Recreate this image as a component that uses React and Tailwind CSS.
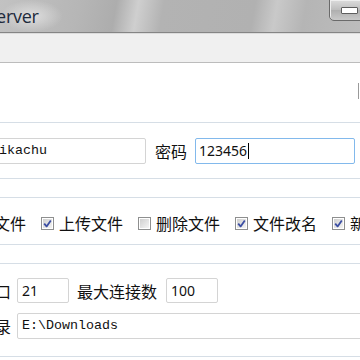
import React from 'react';

const cjk = "font-['Noto_Sans_CJK_SC','Noto_Sans',sans-serif]";

const Check = ({ checked }) => (
  <span className="w-[13px] h-[13px] shrink-0 border border-[#8e8f8f] bg-white p-[1px] flex">
    <span className="flex-1 flex items-center justify-center bg-[linear-gradient(135deg,#cfcfcf,#f4f4f4)]">
      {checked && (
        <svg width="9" height="9" viewBox="0 0 9 9">
          <path d="M1.2 4.6 L3.6 7.4 L7.8 1.4" fill="none" stroke="#3b4ea3" strokeWidth="1.8" strokeLinejoin="round" />
        </svg>
      )}
    </span>
  </span>
);

const Option = ({ checked, label }) => (
  <label className="flex items-center gap-[5px] mr-[15px] shrink-0">
    <Check checked={checked} />
    <span className="w-[64px]">{label}</span>
  </label>
);

const App = () => {
  return (
    <div className={`w-[360px] h-[360px] overflow-hidden bg-white text-[#111] ${cjk} text-[16px] leading-none`}>
      {/* title bar */}
      <div className="h-[33px] flex items-start justify-between border-b border-[#858585] bg-[linear-gradient(100deg,#c2c2c2_0%,#b6b6b6_22%,#adadad_32%,#cfcfcf_38%,#b3b3b3_45%,#b1b1b1_70%,#c9c9c9_76%,#b5b5b5_84%,#bcbcbc_100%)]">
        <div className="h-[32px] flex items-center pr-6 bg-[radial-gradient(ellipse_at_center,#dedede_0%,rgba(220,220,220,0)_70%)]">
          <span className="-ml-[47px] text-[18px] text-[#1d2a3c] font-['Open_Sans',sans-serif] tracking-[-0.3px]">FTP Server</span>
        </div>
        <div className="mr-[-10px] -mt-px w-[41px] h-[22px] rounded-bl-[5px] border border-[#6a6a6a] bg-[linear-gradient(180deg,#dcdcdc,#bdbdbd_50%,#afafaf_51%,#c8c8c8)] flex items-center pl-[11px] shadow-[inset_1px_1px_0_#eeeeee]">
          <span className="w-[17px] h-[7px] rounded-[1px] border border-[#5e5e5e] bg-white" />
        </div>
      </div>

      {/* toolbar strip */}
      <div className="h-[30px] border-t border-[#dcdcdc] border-b border-b-[#bcbcbc] bg-[#f0f0f0]" />

      {/* body */}
      <div className="-ml-[100px] w-[560px]">
        <div className="h-[59px] flex items-center justify-between">
          <span className="ml-[19px] mt-[2px] text-[#333]">服务器设置</span>
          <span className="mr-[100px] w-[2px] h-[16px] -mt-[4px] border-l border-[#9a9a9a]" />
        </div>

        <div className="mx-[10px] h-[57px] border border-[#d6dee6] rounded-[3px] flex items-center pl-[17px]">
          <span className="w-[48px]">用户名</span>
          <div className="ml-[10px] w-[160px] h-[26px] border border-[#d4d4d4] rounded-[2px] flex items-center pl-[4px] font-['Liberation_Mono',monospace] text-[13.33px] text-[#111]">
            pikachu
          </div>
          <span className="ml-[9px] w-[32px]">密码</span>
          <div className="ml-[8px] w-[160px] h-[26px] border border-[#82b9ec] rounded-[2px] flex items-center pl-[3px] font-['Noto_Sans',sans-serif] text-[14px] text-[#111]">
            123456<span className="ml-px w-px h-[16px] bg-black" />
          </div>
        </div>

        <div className="mt-[18px] mx-[10px] h-[48px] border border-[#d6dee6] rounded-[3px] flex items-center pl-[33px] pt-[4px]">
          <Option checked label="下载文件" />
          <Option checked label="上传文件" />
          <Option label="删除文件" />
          <Option checked label="文件改名" />
          <Option checked label="新建目录" />
        </div>

        <div className="mt-[18px] mx-[10px] border border-[#d6dee6] rounded-[3px] pl-[20px] pt-[14px] pb-[17px] flex flex-col gap-[10px]">
          <div className="flex items-center">
            <span className="w-[80px] text-right">端口</span>
            <div className="ml-[6px] w-[52px] h-[25px] border border-[#d4d4d4] rounded-[2px] flex items-center pl-[4px] font-['Noto_Sans',sans-serif] text-[14px]">
              21
            </div>
            <span className="ml-[8px] w-[80px]">最大连接数</span>
            <div className="ml-[9px] w-[52px] h-[25px] border border-[#d4d4d4] rounded-[2px] flex items-center pl-[4px] font-['Noto_Sans',sans-serif] text-[14px]">
              100
            </div>
          </div>
          <div className="flex items-center">
            <span className="w-[80px] text-right">下载目录</span>
            <div className="ml-[6px] w-[400px] h-[26px] border border-[#d4d4d4] rounded-[2px] flex items-center pl-[4px] font-['Liberation_Mono',monospace] text-[13.33px] text-[#111]">
              E:\Downloads
            </div>
          </div>
        </div>
      </div>
    </div>
  );
};

export default App;
